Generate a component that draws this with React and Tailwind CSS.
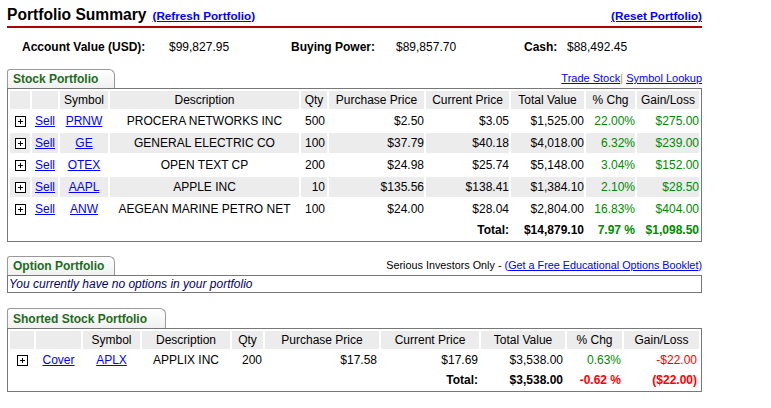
const stocks = [
  ["PRNW", "PROCERA NETWORKS INC", "500", "$2.50", "$3.05", "$1,525.00", "22.00%", "$275.00"],
  ["GE", "GENERAL ELECTRIC CO", "100", "$37.79", "$40.18", "$4,018.00", "6.32%", "$239.00"],
  ["OTEX", "OPEN TEXT CP", "200", "$24.98", "$25.74", "$5,148.00", "3.04%", "$152.00"],
  ["AAPL", "APPLE INC", "10", "$135.56", "$138.41", "$1,384.10", "2.10%", "$28.50"],
  ["ANW", "AEGEAN MARINE PETRO NET", "100", "$24.00", "$28.04", "$2,804.00", "16.83%", "$404.00"],
];

const stockCols = ["w-[20px]", "w-[26px]", "w-[48px]", "w-[189px]", "w-[26px]", "w-[95px]", "w-[83px]", "w-[73px]", "w-[49px]", "w-[62px]"];
const shortCols = ["w-[24px]", "w-[45px]", "w-[57px]", "w-[88px]", "w-[31px]", "w-[114px]", "w-[98px]", "w-[84px]", "w-[55px]", "w-[75px]"];
const heads = ["", "", "Symbol", "Description", "Qty", "Purchase Price", "Current Price", "Total Value", "% Chg", "Gain/Loss"];

function Plus() {
  return (
    <svg width="11" height="11" viewBox="0 0 11 11" className="inline-block align-middle">
      <rect x="0.5" y="0.5" width="10" height="10" fill="white" stroke="black" />
      <line x1="3" y1="5.5" x2="8" y2="5.5" stroke="black" />
      <line x1="5.5" y1="3" x2="5.5" y2="8" stroke="black" />
    </svg>
  );
}

function Tab({ label, w, h }) {
  return (
    <div className={`${w} ${h} border-l border-t border-r border-[#999] rounded-tl-[3px] rounded-tr-[6px] bg-gradient-to-b from-white to-[#f0f0f0] pl-[5px] flex items-center`}>
      <span className="text-[12px] font-bold text-[#1e6b1e]">{label}</span>
    </div>
  );
}

function Head({ cols }) {
  return (
    <tr>
      {heads.map((h, i) => (
        <th key={i} className={`${cols[i]} h-[17px] bg-[#ececec] font-normal text-center p-0`}>{h}</th>
      ))}
    </tr>
  );
}

const link = "text-[#0000ff] underline";
const green = "text-[#008a00]";

export default function App() {
  return (
    <div className="w-[771px] h-[408px] bg-white font-['Liberation_Sans',Arial,sans-serif] text-[12px] text-black">
      <div className="ml-[7px] w-[695px]">
        {/* title */}
        <div className="flex justify-between items-end pt-[6px] pb-[2px] border-b-2 border-[#b00000]">
          <div className="flex items-end gap-[6px]">
            <span className="text-[15.6px] font-bold leading-[18px]">Portfolio Summary</span>
            <a className={`${link} text-[11.7px] font-bold leading-[16px]`}>(Refresh Portfolio)</a>
          </div>
          <a className={`${link} text-[11.7px] font-bold leading-[16px]`}>(Reset Portfolio)</a>
        </div>

        {/* account */}
        <div className="flex items-center h-[37px] pl-[15px]">
          <span className="w-[147px] font-bold">Account Value (USD):</span>
          <span className="w-[122px]">$99,827.95</span>
          <span className="w-[105px] font-bold">Buying Power:</span>
          <span className="w-[128px]">$89,857.70</span>
          <span className="w-[43px] font-bold">Cash:</span>
          <span>$88,492.45</span>
        </div>

        {/* stock portfolio */}
        <div className="mt-[4px] flex justify-between items-center">
          <Tab label="Stock Portfolio" w="w-[108px]" h="h-[19px]" />
          <div className="text-[11px]">
            <a className={link}>Trade Stock</a>
            <span className="text-[#cc9900]">| </span>
            <a className={link}>Symbol Lookup</a>
          </div>
        </div>
        <div className="border border-[#777]">
          <table className="w-full table-fixed border-separate border-spacing-[2px]">
            <thead>
              <Head cols={stockCols} />
            </thead>
            <tbody>
              {stocks.map((r, i) => {
                const bg = i % 2 === 1 ? "bg-[#ececec]" : "";
                return (
                  <tr key={r[0]}>
                    <td className={`${bg} h-[20px] p-0 text-center`}><Plus /></td>
                    <td className={`${bg} p-0 text-center`}><a className={link}>Sell</a></td>
                    <td className={`${bg} p-0 text-center`}><a className={link}>{r[0]}</a></td>
                    <td className={`${bg} p-0 text-center whitespace-nowrap`}>{r[1]}</td>
                    <td className={`${bg} p-0 pr-[2px] text-right`}>{r[2]}</td>
                    <td className={`${bg} p-0 text-right`}>{r[3]}</td>
                    <td className={`${bg} p-0 text-right`}>{r[4]}</td>
                    <td className={`${bg} p-0 text-right`}>{r[5]}</td>
                    <td className={`${bg} p-0 text-right ${green}`}>{r[6]}</td>
                    <td className={`${bg} p-0 text-right ${green}`}>{r[7]}</td>
                  </tr>
                );
              })}
              <tr>
                <td colSpan={6} className="h-[18px] p-0"></td>
                <td className="p-0 text-right font-bold">Total:</td>
                <td className="p-0 text-right font-bold">$14,879.10</td>
                <td className={`p-0 text-right font-bold ${green}`}>7.97 %</td>
                <td className={`p-0 text-right font-bold ${green}`}>$1,098.50</td>
              </tr>
            </tbody>
          </table>
        </div>

        {/* option portfolio */}
        <div className="mt-[14px] flex justify-between items-center">
          <Tab label="Option Portfolio" w="w-[108px]" h="h-[19px]" />
          <div className="text-[10.8px]">
            Serious Investors Only - <span className="text-[#0000ff]">(</span>
            <a className={link}>Get a Free Educational Options Booklet</a>
            <span className="text-[#0000ff]">)</span>
          </div>
        </div>
        <div className="border border-[#777] h-[18px] pl-[1px] flex items-center">
          <span className="italic text-[#000066]">You currently have no options in your portfolio</span>
        </div>

        {/* shorted portfolio */}
        <div className="mt-[15px]">
          <Tab label="Shorted Stock Portfolio" w="w-[159px]" h="h-[20px]" />
        </div>
        <div className="border border-[#777]">
          <table className="w-full table-fixed border-separate border-spacing-[2px]">
            <thead>
              <Head cols={shortCols} />
            </thead>
            <tbody>
              <tr>
                <td className="h-[18px] p-0 text-center"><Plus /></td>
                <td className="p-0 text-center"><a className={link}>Cover</a></td>
                <td className="p-0 text-center"><a className={link}>APLX</a></td>
                <td className="p-0 text-center">APPLIX INC</td>
                <td className="p-0 pr-[1px] text-right">200</td>
                <td className="p-0 pr-[2px] text-right">$17.58</td>
                <td className="p-0 pr-[1px] text-right">$17.69</td>
                <td className="p-0 pr-[2px] text-right">$3,538.00</td>
                <td className={`p-0 pr-[1px] text-right ${green}`}>0.63%</td>
                <td className="p-0 pr-[2px] text-right text-[#ff0000]">-$22.00</td>
              </tr>
              <tr>
                <td colSpan={6} className="h-[18px] p-0"></td>
                <td className="p-0 pr-[1px] text-right font-bold">Total:</td>
                <td className="p-0 pr-[2px] text-right font-bold">$3,538.00</td>
                <td className="p-0 pr-[1px] text-right font-bold text-[#ff0000]">-0.62 %</td>
                <td className="p-0 pr-[2px] text-right font-bold text-[#ff0000]">($22.00)</td>
              </tr>
            </tbody>
          </table>
        </div>
      </div>
    </div>
  );
}
